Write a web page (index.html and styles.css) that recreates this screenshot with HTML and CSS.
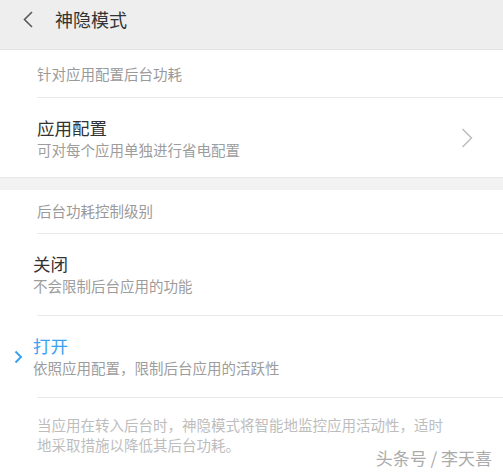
FILE: index.html
```html
<!DOCTYPE html>
<html lang="zh-CN">
<head>
<meta charset="utf-8">
<title>神隐模式</title>
<link rel="stylesheet" href="styles.css">
</head>
<body>
<div class="page">
  <header class="topbar">
    <svg class="back" width="12" height="17" viewBox="0 0 12 17"><path d="M10 1 L2.5 8.5 L10 16" fill="none" stroke="#5a5a5a" stroke-width="1.6"/></svg>
    <div class="title">神隐模式</div>
  </header>

  <div class="sec-title">针对应用配置后台功耗</div>
  <div class="divider"></div>
  <div class="item item-first">
    <div class="text">
      <div class="item-title">应用配置</div>
      <div class="item-sub">可对每个应用单独进行省电配置</div>
    </div>
    <svg class="chev" width="12" height="20" viewBox="0 0 12 20"><path d="M1.5 1 L10.5 10 L1.5 19" fill="none" stroke="#bdbdbd" stroke-width="1.5"/></svg>
  </div>
  <div class="gap"></div>

  <div class="sec-title sec-title-2">后台功耗控制级别</div>
  <div class="divider"></div>
  <div class="item item-opt">
    <div class="gutter"></div>
    <div class="text">
      <div class="item-title">关闭</div>
      <div class="item-sub">不会限制后台应用的功能</div>
    </div>
  </div>
  <div class="divider"></div>
  <div class="item item-opt">
    <div class="gutter">
      <svg class="sel" width="9" height="14" viewBox="0 0 9 14"><path d="M1.5 1.5 L7 7 L1.5 12.5" fill="none" stroke="#3aa2f3" stroke-width="2"/></svg>
    </div>
    <div class="text">
      <div class="item-title active">打开</div>
      <div class="item-sub">依照应用配置，限制后台应用的活跃性</div>
    </div>
  </div>
  <div class="divider"></div>

  <p class="footer">当应用在转入后台时，神隐模式将智能地监控应用活动性，适时地采取措施以降低其后台功耗。</p>

  <div class="watermark">头条号 / 李天喜</div>
</div>
</body>
</html>
```

FILE: styles.css
```css
* { box-sizing: border-box; }
html, body {
  margin: 0;
  padding: 0;
  background: #ffffff;
}
body {
  font-family: "Noto Sans CJK SC", "Noto Sans", sans-serif;
  width: 503px;
  height: 473px;
  overflow: hidden;
}
.page {
  position: relative;
  width: 503px;
  height: 473px;
}
.topbar {
  height: 50px;
  background: #eeeeee;
  border-bottom: 1px solid #e3e3e3;
  display: flex;
  align-items: flex-start;
  padding-top: 10px;
}
.back {
  margin-left: 22px;
  margin-top: 1px;
  display: block;
}
.title {
  margin-left: 21px;
  font-size: 18px;
  line-height: 18px;
  color: #333333;
}
.sec-title {
  padding: 14px 0 13px 37px;
  font-size: 14.5px;
  line-height: 20px;
  color: #9a9a9a;
}
.sec-title-2 {
  padding-top: 11px;
  padding-bottom: 12px;
}
.divider {
  height: 1px;
  margin-left: 37px;
  background: #e9e9e9;
}
.item {
  display: flex;
  align-items: center;
  padding: 18px 0 19px 0;
}
.item-first {
  padding: 18px 30px 17px 37px;
}
.text {
  flex: 1;
}
.item-title {
  font-size: 17.5px;
  line-height: 24px;
  color: #333333;
}
.item-title.active {
  color: #3aa2f3;
}
.item-sub {
  font-size: 14.5px;
  line-height: 20px;
  color: #9d9d9d;
}
.chev {
  display: block;
  margin-top: -1px;
}
.gutter {
  width: 33px;
  flex: none;
  display: flex;
  align-items: center;
  padding-left: 14px;
}
.sel {
  display: block;
  margin-top: 2px;
}
.gap {
  height: 13px;
  background: #f2f2f2;
  border-top: 1px solid #e8e8e8;
}
.footer {
  margin: 0;
  padding: 17px 54px 0 37px;
  font-size: 14.5px;
  line-height: 20px;
  color: #bdbdbd;
}
.watermark {
  position: absolute;
  right: 11px;
  bottom: 5px;
  font-size: 17px;
  line-height: 20px;
  color: #ababab;
  text-shadow: 0 0 1px #ffffff;
}
```
